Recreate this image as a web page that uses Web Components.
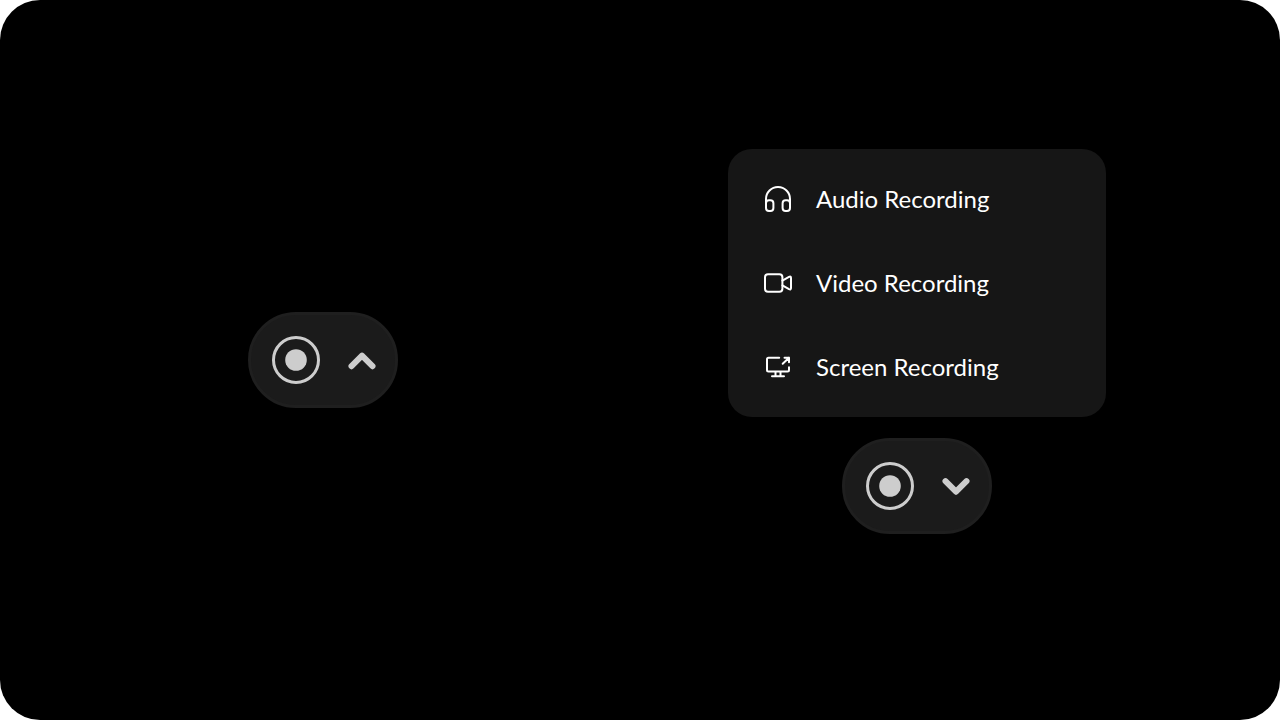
<!DOCTYPE html>
<html lang="en">
<head>
<meta charset="utf-8">
<title>Recorder</title>
<style>
  html { background: #fff; }
  body { margin: 0; }
</style>
</head>
<body>
<recorder-stage>
  <record-control slot="closed"></record-control>
  <record-menu slot="open">
    <record-option icon="headphones">Audio Recording</record-option>
    <record-option icon="video">Video Recording</record-option>
    <record-option icon="screen">Screen Recording</record-option>
  </record-menu>
  <record-control slot="open" expanded></record-control>
</recorder-stage>
<script>
  const ICONS = {
    headphones: '<path d="M4 20v-4a12 12 0 0 1 24 0v4"/><rect x="4" y="17.3" width="7.4" height="10.7" rx="3"/><rect x="20.6" y="17.3" width="7.4" height="10.7" rx="3"/>',
    video: '<rect x="3" y="7.3" width="17.4" height="17.4" rx="3"/><path d="M20.4 13.6l6.6-3.7q2-1 2 1v10.2q0 2-2 1l-6.6-3.7"/>',
    screen: '<path d="M17.2 6.7H6.5Q5 6.7 5 8.2V19q0 1.5 1.5 1.5h19Q27 20.5 27 19v-2.8M13.5 20.5v4.8M18.5 20.5v4.8M10 25.3h12M20.7 12.7l6.3-6M22.5 6.7h4.5v4.5"/>'
  };

  class RecorderStage extends HTMLElement {
    constructor() {
      super();
      this.attachShadow({ mode: 'open' }).innerHTML = `
        <style>
          :host { display: block; font-family: Lato, sans-serif; }
          main {
            box-sizing: border-box;
            display: flex;
            align-items: center;
            justify-content: space-between;
            min-height: 100vh;
            padding: 0 174px 0 248px;
            border-radius: 40px;
            background: #000;
          }
          .open {
            display: flex;
            flex-direction: column;
            align-items: center;
            gap: 21px;
            padding-bottom: 37px;
          }
        </style>
        <main>
          <slot name="closed"></slot>
          <div class="open"><slot name="open"></slot></div>
        </main>`;
    }
  }

  class RecordMenu extends HTMLElement {
    constructor() {
      super();
      this.attachShadow({ mode: 'open' }).innerHTML = `
        <style>
          :host {
            box-sizing: border-box;
            display: block;
            width: 378px;
            padding: 8px 0;
            border-radius: 24px;
            background: #161616;
          }
        </style>
        <slot></slot>`;
    }
  }

  class RecordOption extends HTMLElement {
    constructor() {
      super();
      this.attachShadow({ mode: 'open' }).innerHTML = `
        <style>
          :host { display: block; }
          button {
            display: flex;
            align-items: center;
            gap: 22px;
            width: 100%;
            height: 84px;
            padding: 0 34px;
            border: 0;
            background: none;
            color: #fff;
            font: 400 24px/32px Lato, sans-serif;
            text-align: left;
            cursor: pointer;
          }
          svg { flex: none; }
        </style>
        <button type="button">
          <svg width="32" height="32" viewBox="0 0 32 32" fill="none" stroke="currentColor" stroke-width="2" stroke-linecap="round" stroke-linejoin="round" aria-hidden="true">${ICONS[this.getAttribute('icon')]}</svg>
          <span><slot></slot></span>
        </button>`;
    }
  }

  class RecordControl extends HTMLElement {
    constructor() {
      super();
      const expanded = this.hasAttribute('expanded');
      const chevron = expanded ? 'M5.5 11.2L16 21.7L26.5 11.2' : 'M5.5 22.2L16 11.7L26.5 22.2';
      this.attachShadow({ mode: 'open' }).innerHTML = `
        <style>
          :host {
            box-sizing: border-box;
            display: flex;
            align-items: center;
            justify-content: space-between;
            width: 150px;
            height: 96px;
            padding: 0 17px 0 21px;
            border: 3px solid #1f1f1f;
            border-radius: 48px;
            background: #1b1b1b;
            color: #cdcdcd;
          }
          button {
            display: block;
            padding: 0;
            border: 0;
            background: none;
            color: inherit;
            cursor: pointer;
          }
          svg { display: block; }
        </style>
        <button type="button" aria-label="Record">
          <svg width="48" height="48" viewBox="0 0 48 48" aria-hidden="true">
            <circle cx="24" cy="24" r="22.5" fill="none" stroke="currentColor" stroke-width="3"/>
            <circle cx="24" cy="24" r="10.8" fill="currentColor"/>
          </svg>
        </button>
        <button type="button" aria-label="Recording options" aria-expanded="${expanded}">
          <svg width="32" height="32" viewBox="0 0 32 32" fill="none" stroke="currentColor" stroke-width="6" stroke-linecap="round" stroke-linejoin="round" aria-hidden="true"><path d="${chevron}"/></svg>
        </button>`;
    }
  }

  customElements.define('recorder-stage', RecorderStage);
  customElements.define('record-menu', RecordMenu);
  customElements.define('record-option', RecordOption);
  customElements.define('record-control', RecordControl);
</script>
</body>
</html>
